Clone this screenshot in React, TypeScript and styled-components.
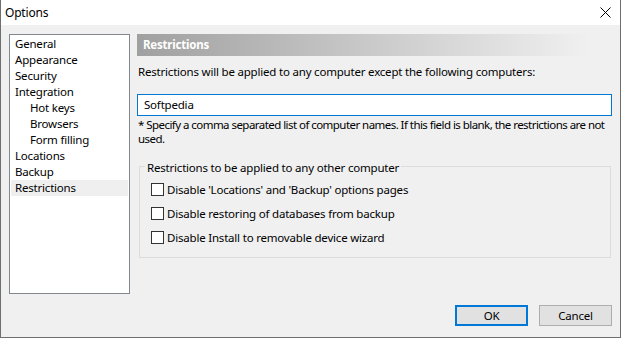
import styled, { createGlobalStyle } from "styled-components";

const GlobalStyle = createGlobalStyle`
  html, body {
    margin: 0;
    padding: 0;
    background: #ffffff;
  }
  * {
    box-sizing: border-box;
  }
`;

const Window = styled.div`
  width: 621px;
  height: 338px;
  display: flex;
  flex-direction: column;
  background: #f0f0f0;
  border: 1px solid #6f6f6f;
  border-top: none;
  font-family: "Noto Sans", "Segoe UI", sans-serif;
  font-size: 11.5px;
  letter-spacing: -0.2px;
  color: #000;
`;

const TitleBar = styled.div`
  height: 25px;
  flex: none;
  display: flex;
  align-items: center;
  justify-content: space-between;
  background: #ffffff;
  padding: 0 9px 0 4px;
  font-size: 12px;
`;

const Body = styled.div`
  flex: 1;
  display: flex;
  flex-direction: column;
  padding: 9px 8px 0 8px;
`;

const Main = styled.div`
  display: flex;
  gap: 7px;
  height: 260px;
`;

const Tree = styled.div`
  width: 121px;
  flex: none;
  background: #ffffff;
  border: 1px solid #828790;
  padding: 1px;
`;

const TreeItem = styled.div<{ $level: number; $selected?: boolean }>`
  height: 16px;
  line-height: 16px;
  padding-left: ${(p) => (p.$level ? 19 : 4)}px;
  background: ${(p) => (p.$selected ? "#efefef" : "transparent")};
  white-space: nowrap;
`;

const Panel = styled.div`
  flex: 1;
  min-width: 0;
  display: flex;
  flex-direction: column;
`;

const Header = styled.div`
  height: 22px;
  line-height: 22px;
  padding-left: 6px;
  color: #ffffff;
  font-weight: bold;
  background: linear-gradient(to right, #a0a0a0 0%, #f0f0f0 95%);
`;

const Intro = styled.div`
  margin-top: 8px;
  line-height: 16px;
  padding-left: 1px;
`;

const Input = styled.div`
  margin-top: 14px;
  height: 22px;
  line-height: 20px;
  border: 1px solid #0078d7;
  background: #ffffff;
  padding-left: 6px;
`;

const Hint = styled.div`
  margin-top: 2px;
  line-height: 14px;
  padding-left: 1px;
  letter-spacing: -0.55px;
`;

const Group = styled.fieldset`
  margin: 11px 1px 0 2px;
  border: 1px solid #dcdcdc;
  padding: 2px 0 8px 11px;
`;

const Legend = styled.legend`
  margin-left: -6px;
  padding: 4px 2px 0 2px;
  line-height: 14px;
`;

const CheckRow = styled.label`
  height: 24px;
  display: flex;
  align-items: center;
  gap: 3px;
`;

const Box = styled.span`
  width: 13px;
  height: 13px;
  border: 1px solid #333333;
  background: #ffffff;
  flex: none;
`;

const Footer = styled.div`
  margin-top: 11px;
  display: flex;
  justify-content: flex-end;
  gap: 11px;
`;

const Button = styled.div<{ $default?: boolean }>`
  width: 73px;
  height: 21px;
  display: flex;
  align-items: center;
  justify-content: center;
  background: #e1e1e1;
  border: ${(p) => (p.$default ? "2px solid #0078d7" : "1px solid #adadad")};
`;

const tree = [
  { label: "General", level: 0 },
  { label: "Appearance", level: 0 },
  { label: "Security", level: 0 },
  { label: "Integration", level: 0 },
  { label: "Hot keys", level: 1 },
  { label: "Browsers", level: 1 },
  { label: "Form filling", level: 1 },
  { label: "Locations", level: 0 },
  { label: "Backup", level: 0 },
  { label: "Restrictions", level: 0 },
];

const options = [
  "Disable 'Locations' and 'Backup' options pages",
  "Disable restoring of databases from backup",
  "Disable Install to removable device wizard",
];

const App = () => {
  return (
    <>
      <GlobalStyle />
      <Window>
        <TitleBar>
          <span>Options</span>
          <svg width="11" height="11" viewBox="0 0 11 11">
            <path d="M0.5 0.5 L10.5 10.5 M10.5 0.5 L0.5 10.5" stroke="#000" strokeWidth="1" />
          </svg>
        </TitleBar>
        <Body>
          <Main>
            <Tree>
              {tree.map((t) => (
                <TreeItem key={t.label} $level={t.level} $selected={t.label === "Restrictions"}>
                  {t.label}
                </TreeItem>
              ))}
            </Tree>
            <Panel>
              <Header>Restrictions</Header>
              <Intro>Restrictions will be applied to any computer except the following computers:</Intro>
              <Input>Softpedia</Input>
              <Hint>
                * Specify a comma separated list of computer names. If this field is blank, the restrictions are not
                used.
              </Hint>
              <Group>
                <Legend>Restrictions to be applied to any other computer</Legend>
                {options.map((o) => (
                  <CheckRow key={o}>
                    <Box />
                    {o}
                  </CheckRow>
                ))}
              </Group>
            </Panel>
          </Main>
          <Footer>
            <Button $default>OK</Button>
            <Button>Cancel</Button>
          </Footer>
        </Body>
      </Window>
    </>
  );
};

export default App;
